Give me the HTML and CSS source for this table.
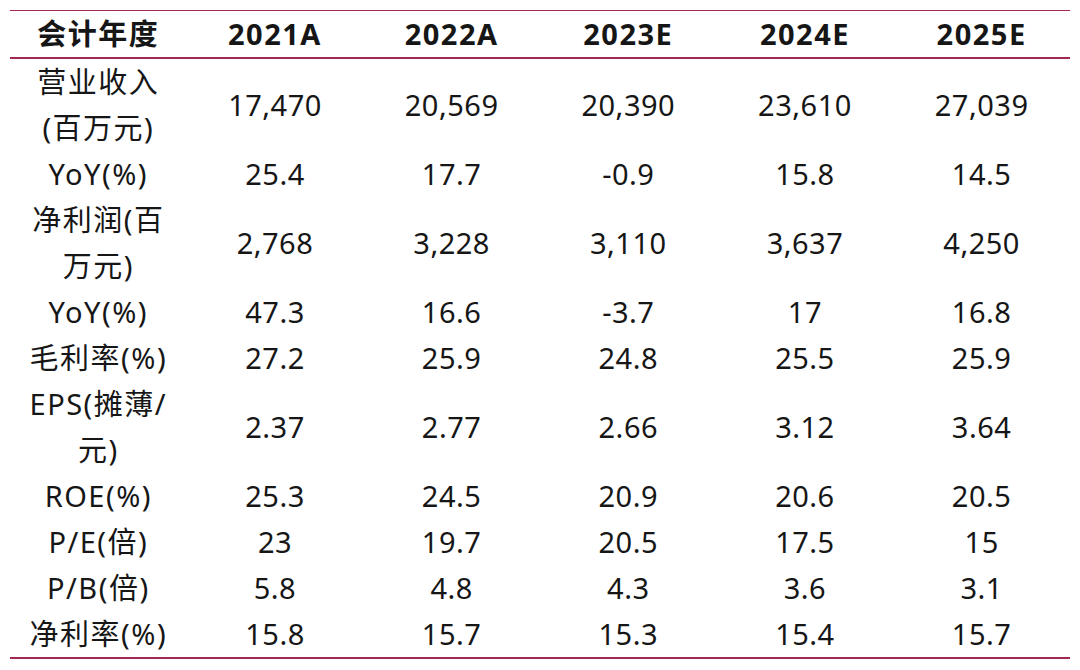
FILE: index.html
```html
<!DOCTYPE html>
<html lang="zh-CN">
<head>
<meta charset="utf-8">
<link rel="stylesheet" href="styles.css">
</head>
<body>
<table class="fin">
  <colgroup>
    <col class="c-label"><col><col><col><col><col>
  </colgroup>
  <thead>
    <tr><th class="label">会计年度</th><th>2021A</th><th>2022A</th><th>2023E</th><th>2024E</th><th>2025E</th></tr>
  </thead>
  <tbody>
    <tr><td class="label">营业收入(百万元)</td><td>17,470</td><td>20,569</td><td>20,390</td><td>23,610</td><td>27,039</td></tr>
    <tr><td class="label">YoY(%)</td><td>25.4</td><td>17.7</td><td>-0.9</td><td>15.8</td><td>14.5</td></tr>
    <tr><td class="label">净利润(百万元)</td><td>2,768</td><td>3,228</td><td>3,110</td><td>3,637</td><td>4,250</td></tr>
    <tr><td class="label">YoY(%)</td><td>47.3</td><td>16.6</td><td>-3.7</td><td>17</td><td>16.8</td></tr>
    <tr><td class="label">毛利率(%)</td><td>27.2</td><td>25.9</td><td>24.8</td><td>25.5</td><td>25.9</td></tr>
    <tr><td class="label">EPS(摊薄/元)</td><td>2.37</td><td>2.77</td><td>2.66</td><td>3.12</td><td>3.64</td></tr>
    <tr><td class="label">ROE(%)</td><td>25.3</td><td>24.5</td><td>20.9</td><td>20.6</td><td>20.5</td></tr>
    <tr><td class="label">P/E(倍)</td><td>23</td><td>19.7</td><td>20.5</td><td>17.5</td><td>15</td></tr>
    <tr><td class="label">P/B(倍)</td><td>5.8</td><td>4.8</td><td>4.3</td><td>3.6</td><td>3.1</td></tr>
    <tr><td class="label">净利率(%)</td><td>15.8</td><td>15.7</td><td>15.3</td><td>15.4</td><td>15.7</td></tr>
  </tbody>
</table>
</body>
</html>
```

FILE: styles.css
```css
html, body {
  margin: 0;
  padding: 0;
  background: #ffffff;
}

body {
  padding: 10px;
  font-family: "Noto Sans", "Noto Sans CJK SC", sans-serif;
  color: #161616;
}

.fin {
  width: 1060px;
  table-layout: fixed;
  border-collapse: collapse;
  font-size: 29px;
}

.fin th,
.fin td {
  padding: 0 8px;
  text-align: center;
  vertical-align: middle;
  line-height: 46px;
  font-weight: 400;
  letter-spacing: 0.5px;
}

.fin td.label,
.fin th.label {
  padding: 0 16px;
  letter-spacing: 1.5px;
}

.fin thead th {
  font-weight: 700;
  letter-spacing: 1.5px;
  border-top: 1px solid #a3284f;
  border-bottom: 2px solid #a3284f;
}

.fin tbody tr:last-child td {
  border-bottom: 2px solid #a3284f;
}
```
